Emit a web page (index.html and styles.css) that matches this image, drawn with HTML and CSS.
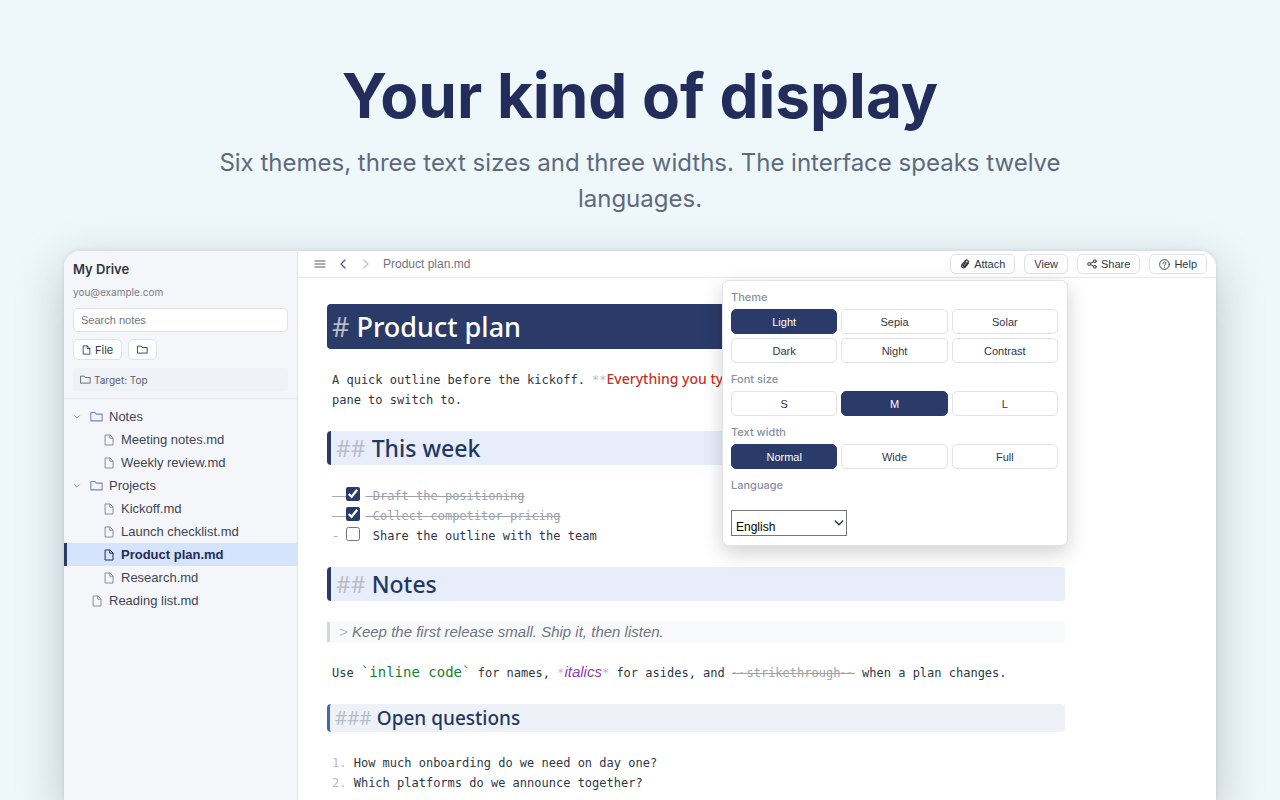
FILE: index.html
```html
<!DOCTYPE html>
<html lang="en">
<head>
<meta charset="utf-8">
<meta name="viewport" content="width=device-width, initial-scale=1">
<title>Your kind of display</title>
<link rel="stylesheet" href="styles.css">
</head>
<body>
<svg class="sprite" aria-hidden="true">
  <symbol id="doc" viewBox="0 0 10 12"><path d="M1.500 1h4.500l3 3v7h-7.500zM5.800 1v3.200h3.200"/></symbol>
  <symbol id="folder" viewBox="0 0 12 10"><path d="M.8 1.300h3.700l1.200 1.500h5.500v6.200H.8z"/></symbol>
  <symbol id="down" viewBox="0 0 8 8"><path d="M1.500 2.700 4 5.200l2.500-2.500"/></symbol>
</svg>
<header class="hero">
  <h1>Your kind of display</h1>
  <p>Six themes, three text sizes and three widths. The interface speaks twelve languages.</p>
</header>
<div class="window">
  <aside class="sidebar">
    <div class="side-head">
      <h2 class="drive">My Drive</h2>
      <div class="account">you@example.com</div>
      <input class="search" type="text" placeholder="Search notes" aria-label="Search notes">
      <div class="create">
        <button class="btn side-btn" type="button"><svg class="icon doc-small"><use href="#doc"/></svg>File</button>
        <button class="btn side-btn" type="button" aria-label="New folder"><svg class="icon folder-small"><use href="#folder"/></svg></button>
      </div>
      <div class="target"><svg class="icon folder-small"><use href="#folder"/></svg>Target: Top</div>
    </div>
    <nav class="tree" aria-label="Files">
      <a class="row" href="#"><svg class="icon twist"><use href="#down"/></svg><svg class="icon folder"><use href="#folder"/></svg>Notes</a>
      <a class="row child" href="#"><svg class="icon doc"><use href="#doc"/></svg>Meeting notes.md</a>
      <a class="row child" href="#"><svg class="icon doc"><use href="#doc"/></svg>Weekly review.md</a>
      <a class="row" href="#"><svg class="icon twist"><use href="#down"/></svg><svg class="icon folder"><use href="#folder"/></svg>Projects</a>
      <a class="row child" href="#"><svg class="icon doc"><use href="#doc"/></svg>Kickoff.md</a>
      <a class="row child" href="#"><svg class="icon doc"><use href="#doc"/></svg>Launch checklist.md</a>
      <a class="row child current" href="#" aria-current="page"><svg class="icon doc"><use href="#doc"/></svg>Product plan.md</a>
      <a class="row child" href="#"><svg class="icon doc"><use href="#doc"/></svg>Research.md</a>
      <a class="row top-file" href="#"><svg class="icon doc"><use href="#doc"/></svg>Reading list.md</a>
    </nav>
  </aside>
  <main class="main">
    <div class="toolbar">
      <button class="nav-btn" type="button" aria-label="Menu"><svg class="icon nav" viewBox="0 0 12 12"><path d="M1 3h10M1 6h10M1 9h10"/></svg></button>
      <button class="nav-btn" type="button" aria-label="Back"><svg class="icon nav" viewBox="0 0 12 12"><path d="M8 2 4 6l4 4"/></svg></button>
      <button class="nav-btn faint" type="button" aria-label="Forward" disabled><svg class="icon nav" viewBox="0 0 12 12"><path d="m4 2 4 4-4 4"/></svg></button>
      <span class="crumb">Product plan.md</span>
      <div class="actions">
        <button class="btn" type="button"><svg class="icon clip" viewBox="0 0 10 10"><path d="M8.500 4.200 5.200 8.100a2 2 0 0 1-3.100-2.600l3.500-4a1.500 1.500 0 0 1 2.300 2L4.500 7.300a.8.8 0 0 1-1.200-1l2.900-3.400M8.500 2.600 4.800 7"/></svg>Attach</button>
        <div class="view">
          <button class="btn" type="button" aria-expanded="true">View</button>
          <div class="panel">
            <div class="caption">Theme</div>
            <div class="options">
              <button class="option on" type="button">Light</button><button class="option" type="button">Sepia</button><button class="option" type="button">Solar</button>
              <button class="option" type="button">Dark</button><button class="option" type="button">Night</button><button class="option" type="button">Contrast</button>
            </div>
            <div class="caption">Font size</div>
            <div class="options">
              <button class="option" type="button">S</button><button class="option on" type="button">M</button><button class="option" type="button">L</button>
            </div>
            <div class="caption">Text width</div>
            <div class="options">
              <button class="option on" type="button">Normal</button><button class="option" type="button">Wide</button><button class="option" type="button">Full</button>
            </div>
            <label class="caption" for="language">Language</label>
            <div class="select-box">
              <select id="language"><option>English</option></select>
              <svg class="icon caret"><use href="#down"/></svg>
            </div>
          </div>
        </div>
        <button class="btn" type="button"><svg class="icon tool" viewBox="0 0 10 10"><circle cx="2.200" cy="5" r="1.500"/><circle cx="7.800" cy="2.200" r="1.400"/><circle cx="7.800" cy="7.800" r="1.400"/><path d="m3.500 4.300 3-1.500M3.500 5.700l3 1.500"/></svg>Share</button>
        <button class="btn" type="button"><svg class="icon help" viewBox="0 0 12 12"><circle cx="6" cy="6" r="5.300"/><path d="M4.400 4.800c0-2.200 3.200-2.100 3.200-.2 0 1.200-1.600 1.200-1.600 2.300M6 8.700v.3"/></svg>Help</button>
      </div>
    </div>
    <article class="doc-body">
      <h2 class="h1"><span class="mark">#</span> Product plan</h2>
      <p>A quick outline before the kickoff. <span class="mark">**</span><strong>Everything you type</strong><br>pane to switch to.</p>
      <h3 class="h2"><span class="mark">##</span> This week</h3>
      <div class="tasks">
        <label class="task done"><span class="dash">- </span><input type="checkbox" checked><span class="label"> Draft the positioning</span></label>
        <label class="task done"><span class="dash">- </span><input type="checkbox" checked><span class="label"> Collect competitor pricing</span></label>
        <label class="task"><span class="dash">- </span><input type="checkbox"><span class="label"> Share the outline with the team</span></label>
      </div>
      <h3 class="h2"><span class="mark">##</span> Notes</h3>
      <blockquote><span class="mark">&gt;</span> Keep the first release small. Ship it, then listen.</blockquote>
      <p>Use <code>`inline code`</code> for names, <span class="mark">*</span><em>italics</em><span class="mark">*</span> for asides, and <del><span class="mark">~~</span>strikethrough<span class="mark">~~</span></del> when a plan changes.</p>
      <h4 class="h3"><span class="mark">###</span> Open questions</h4>
      <p><span class="mark">1.</span> How much onboarding do we need on day one?<br><span class="mark">2.</span> Which platforms do we announce together?</p>
    </article>
  </main>
</div>
</body>
</html>
```
FILE: styles.css
```css
* { box-sizing: border-box; }
body {
  margin: 0;
  height: 100vh;
  overflow: hidden;
  display: flex;
  flex-direction: column;
  padding: 0 64px;
  background: #eef7fa;
  font-family: Inter, "Liberation Sans", sans-serif;
  color: #2f3747;
}
.sprite { display: none; }
.hero {
  padding: 60px 128px 34px;
  text-align: center;
}
.hero h1 {
  margin: 0 0 13px;
  font-size: 62px;
  line-height: 72px;
  font-weight: 700;
  color: #232d5c;
}
.hero p {
  margin: 0;
  font-size: 24px;
  line-height: 36px;
  color: #5e6980;
}
.window {
  flex: 1;
  min-height: 0;
  display: flex;
  border-radius: 16px 16px 0 0;
  background: #fff;
  box-shadow: 0 16px 48px rgba(40, 60, 70, .26), 0 0 4px rgba(40, 60, 80, .14);
}
.icon {
  flex: none;
  fill: none;
  stroke: currentColor;
  stroke-linecap: round;
  stroke-linejoin: round;
}
.doc { width: 10px; height: 12px; }
.doc-small { width: 9px; height: 10px; }
.folder { width: 13px; height: 11px; color: #7584c8; }
.folder-small { width: 11px; height: 9px; }
.twist { width: 8px; height: 8px; color: #8a8f9a; }
.tool { width: 10px; height: 10px; }
.clip { width: 10px; height: 10px; stroke-width: 1.200; }
.help { width: 11px; height: 11px; }
.nav { width: 12px; height: 12px; stroke-width: 1.200; }

.sidebar {
  flex: none;
  width: 234px;
  background: #f4f6f9;
  border-right: 1px solid #dfe2e7;
  border-radius: 16px 0 0;
}
.side-head {
  padding: 9px 9px 7px;
  border-bottom: 1px solid #e8ebef;
}
.drive {
  margin: 0;
  font-size: 13px;
  line-height: 18px;
  font-weight: 600;
}
.account {
  margin-top: 7px;
  font-size: 10px;
  line-height: 14px;
  color: #787d87;
}
.search {
  display: block;
  width: 100%;
  height: 24px;
  margin-top: 9px;
  padding: 0 7px;
  border: 1px solid #dfe2e7;
  border-radius: 5px;
  background: #fff;
  font: 11px "Liberation Sans", sans-serif;
}
.search::placeholder { color: #70757d; }
.create {
  display: flex;
  gap: 6px;
  margin-top: 7px;
}
.btn {
  display: inline-flex;
  align-items: center;
  justify-content: center;
  gap: 4px;
  height: 20px;
  padding: 0 9px;
  border: 1px solid #dfe2e7;
  border-radius: 5px;
  background: #fff;
  color: #2f3747;
  font: 11px "Liberation Sans", sans-serif;
}
.side-btn { height: 21px; padding: 0 8px; font-family: Inter, sans-serif; }
.target {
  display: flex;
  align-items: center;
  gap: 3px;
  height: 23px;
  margin-top: 8px;
  padding: 0 7px;
  border-radius: 4px;
  background: #eff2f6;
  font-size: 10px;
  color: #596170;
}
.tree {
  padding-top: 6px;
  font: 13px "Liberation Sans", sans-serif;
}
.row {
  display: flex;
  align-items: center;
  gap: 6px;
  height: 23px;
  padding-left: 9px;
  color: #3f4653;
  text-decoration: none;
}
.row .doc { color: #8a8f9a; }
.child { padding-left: 40px; gap: 7px; }
.top-file { padding-left: 28px; gap: 7px; }
.row .folder { margin-left: 3px; }
.current {
  padding-left: 37px;
  border-left: 3px solid #2b3b69;
  background: #d5e4fc;
  font-weight: 700;
  color: #1f2c55;
}
.row.current .doc { color: #1f2c55; }

.main { flex: 1; min-width: 0; }
.toolbar {
  display: flex;
  align-items: center;
  gap: 11px;
  height: 27px;
  padding: 0 9px 0 16px;
  border-bottom: 1px solid #e8e9ec;
}
.nav-btn {
  display: flex;
  padding: 0;
  border: 0;
  background: none;
  color: #555b66;
}
.faint { color: #c0c3c9; }
.crumb {
  font: 12px "Liberation Sans", sans-serif;
  color: #70757d;
}
.actions {
  display: flex;
  gap: 9px;
  margin-left: auto;
}
.view { position: relative; display: flex; }
.panel {
  position: absolute;
  z-index: 1;
  top: 26px;
  right: 0;
  width: 346px;
  padding: 9px 9px 9px 8px;
  border: 1px solid #dfe2e7;
  border-radius: 7px;
  background: #fff;
  box-shadow: 0 7px 20px rgba(0, 0, 0, .18);
}
.caption {
  display: block;
  margin-bottom: 5px;
  font-size: 11px;
  line-height: 14px;
  font-weight: 500;
  color: #8b8fa2;
}
.options {
  display: grid;
  grid-template-columns: repeat(3, 1fr);
  gap: 4px;
  margin-bottom: 9px;
}
.option {
  height: 25px;
  padding: 0;
  border: 1px solid #dfe2e7;
  border-radius: 5px;
  background: #fff;
  font: 11px "Liberation Sans", sans-serif;
  color: #2f3747;
}
.on { border-color: #2b3b69; background: #2b3b69; color: #fff; }
.select-box {
  position: relative;
  width: 116px;
  margin-top: 18px;
}
.select-box select {
  display: block;
  width: 100%;
  height: 26px;
  padding: 7px 4px 0;
  border: 1px solid #767676;
  border-radius: 0;
  appearance: none;
  background: #fff;
  font: 12px "Liberation Sans", sans-serif;
  color: #000;
}
.caret {
  position: absolute;
  top: 7px;
  right: 2px;
  width: 12px;
  height: 12px;
  pointer-events: none;
}

.doc-body {
  display: flex;
  flex-direction: column;
  gap: 21px;
  max-width: 796px;
  padding: 26px 29px 0;
  font: 12px/20px "DejaVu Sans Mono", monospace;
  color: #2f3747;
}
.doc-body p { margin: 0; padding-left: 5px; }
.mark { color: #b9bdc4; font-weight: 400; }
.h1, .h2, .h3 {
  margin: 0;
  border-radius: 4px;
  font-family: "Noto Sans", sans-serif;
  font-weight: 500;
  color: #1f3864;
}
.h1 {
  padding-left: 5px;
  background: #2b3b69;
  font-size: 27px;
  line-height: 45px;
  color: #fff;
}
.h2 {
  padding-left: 5px;
  border-left: 4px solid #2b3b69;
  background: #e8edfb;
  font-size: 23px;
  line-height: 34px;
}
.h3 {
  padding-left: 5px;
  border-left: 3px solid #3f6ab0;
  background: #eef1f7;
  font-size: 19px;
  line-height: 28px;
}
strong {
  font: 500 14px/16px "Noto Sans", sans-serif;
  color: #c4342b;
}
em {
  font: italic 15px/16px "Liberation Sans", sans-serif;
  color: #8a3fb0;
}
code {
  font-family: "DejaVu Sans Mono", monospace;
  font-size: 14px;
  line-height: 16px;
  color: #18812c;
}
del { color: #9da2a8; }
.tasks { padding-left: 5px; }
.task { display: flex; height: 20px; white-space: pre; }
.task input {
  width: 14px;
  height: 14px;
  margin: 1px 5px 0 0;
  accent-color: #2b3b69;
}
.dash { color: #a4a8af; }
.done { color: #9da2a8; }
.done span { text-decoration: line-through; }
blockquote {
  margin: 0;
  padding-left: 9px;
  border-left: 3px solid #d3d6da;
  background: #f8f9fb;
  font: italic 15px/20px "Liberation Sans", sans-serif;
  color: #70767e;
}
```
